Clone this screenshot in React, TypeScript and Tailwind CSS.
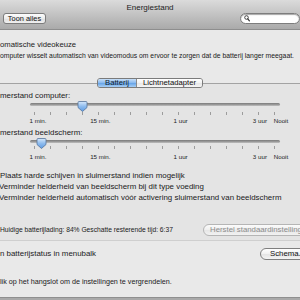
import React from "react";

const ticks = Array.from({ length: 16 }, (_, i) => i);

function Thumb() {
  return (
    <svg width="11" height="11" viewBox="0 0 11 11" className="block">
      <defs>
        <linearGradient id="tg" x1="0" y1="0" x2="0" y2="1">
          <stop offset="0" stopColor="#d6e8fb" />
          <stop offset="0.5" stopColor="#8dbbee" />
          <stop offset="1" stopColor="#5d9be2" />
        </linearGradient>
      </defs>
      <path d="M1 1.5 Q1 0.5 2 0.5 H9 Q10 0.5 10 1.5 V6.5 L5.5 10.5 L1 6.5 Z" fill="url(#tg)" stroke="#56739a" strokeWidth="0.8" />
    </svg>
  );
}

function Slider({ thumbClass, rowClass }: { thumbClass: string; rowClass: string }) {
  return (
    <div className={rowClass}>
      <div className="relative ml-[30px] w-[250px] h-[3px] mt-[3px] rounded-full bg-[linear-gradient(to_bottom,#7a7a7a,#9d9d9d_60%,#c2c2c2)]">
        <div className={thumbClass}>
          <Thumb />
        </div>
      </div>
    </div>
  );
}

function Ticks({ cls }: { cls: string }) {
  return (
    <div className={"ml-[26px] grid grid-cols-[repeat(16,16.07px)] h-[3px] " + cls}>
      {ticks.map((i) => (
        <div key={i} className="flex justify-center">
          <div className="w-px h-[3px] bg-[#9c9c9c]" />
        </div>
      ))}
    </div>
  );
}

function TickLabels({ cls }: { cls: string }) {
  return (
    <div className={"ml-[26px] grid grid-cols-[repeat(16,16.07px)] h-[7px] text-[6.2px] leading-[7px] text-[#222] " + cls}>
      <div className="col-start-1 flex justify-center whitespace-nowrap translate-x-[4px]">1 min.</div>
      <div className="col-start-5 flex justify-center whitespace-nowrap translate-x-[2px]">15 min.</div>
      <div className="col-start-10 flex justify-center whitespace-nowrap translate-x-[2px]">1 uur</div>
      <div className="col-start-15 flex justify-center whitespace-nowrap translate-x-[1px]">3 uur</div>
      <div className="col-start-16 flex justify-center whitespace-nowrap translate-x-[6px]">Nooit</div>
    </div>
  );
}

export default function App() {
  return (
    <div className="w-[300px] h-[300px] overflow-hidden flex flex-col bg-[#e9e9e9] text-[#1a1a1a] font-['Liberation_Sans',Arial,sans-serif]">
      {/* Title bar + toolbar */}
      <div className="h-[30px] shrink-0 flex flex-col border-b border-[#8e8e8e] bg-[linear-gradient(to_bottom,#dbdbdb,#aaaaaa)]">
        <div className="h-[13px] flex items-center justify-center text-[8px] leading-none text-[#222] pt-[2px]">Energiestand</div>
        <div className="h-[11px] flex items-center">
          <div className="ml-[3px] w-[51px] h-[11px] flex items-center justify-center rounded-[3px] border border-[#7c7c7c] bg-[linear-gradient(to_bottom,#fdfdfd,#ececec_50%,#e0e0e0_51%,#f0f0f0)] text-[7.4px] leading-none text-[#111]">
            Toon alles
          </div>
          <div className="ml-[194px] w-[60px] h-[11.5px] shrink-0 flex items-center rounded-full border border-[#7d7d7d] bg-white shadow-[inset_0_1px_1px_rgba(0,0,0,0.35)] pl-[3px]">
            <svg width="6" height="7" viewBox="0 0 6 7">
              <circle cx="2.5" cy="2.5" r="1.8" fill="none" stroke="#333" strokeWidth="0.9" />
              <path d="M3.8 3.9 L5.4 5.9" stroke="#333" strokeWidth="1.2" strokeLinecap="round" />
            </svg>
          </div>
        </div>
      </div>

      {/* Heading */}
      <div className="mt-[10px] h-[10px] leading-[10px] text-[7.7px] whitespace-nowrap">omatische videokeuze</div>
      <div className="mt-px h-[9px] leading-[9px] text-[6.8px] whitespace-nowrap">omputer wisselt automatisch van videomodus om ervoor te zorgen dat de batterij langer meegaat.</div>

      {/* Tabs row */}
      <div className="mt-[18px] h-[10px] flex items-center bg-[linear-gradient(to_bottom,transparent_50%,#e4e4e4_50%)]">
        <div className="w-[97px] h-px bg-[#a3a3a3]" />
        <div className="w-[106px] h-[10px] flex rounded-[3px] border border-[#7b7b7b] overflow-hidden text-[7.7px] leading-none">
          <div className="w-[38px] flex items-center justify-center bg-[linear-gradient(to_bottom,#c8e0f8,#86b7ee_50%,#64a2e7_51%,#a8cff5)] text-[#0d1a2b]">Batterij</div>
          <div className="flex-1 flex items-center justify-center border-l border-[#8a8a8a] bg-[linear-gradient(to_bottom,#ffffff,#f3f3f3_50%,#e7e7e7_51%,#f6f6f6)] text-[#111]">Lichtnetadapter</div>
        </div>
        <div className="flex-1 h-px bg-[#a3a3a3]" />
      </div>

      {/* Tab box */}
      <div className="flex flex-col bg-[#e4e4e4] border-b border-[#cfcfcf] pb-[4px]">
        <div className="mt-[3px] h-[9px] leading-[9px] text-[7.9px] whitespace-nowrap">merstand computer:</div>
        <Slider rowClass="h-[12px]" thumbClass="absolute left-[47px] top-[-2px]" />
        <Ticks cls="" />
        <TickLabels cls="mt-[2px]" />

        <div className="mt-[4px] h-[9px] leading-[9px] text-[7.9px] whitespace-nowrap">merstand beeldscherm:</div>
        <Slider rowClass="h-[9px]" thumbClass="absolute left-[6px] top-[-2px]" />
        <Ticks cls="" />
        <TickLabels cls="mt-[4px]" />

        <div className="mt-[10px] h-[11px] leading-[11px] text-[7.9px] whitespace-nowrap">Plaats harde schijven in sluimerstand indien mogelijk</div>
        <div className="h-[11px] leading-[11px] text-[7.9px] whitespace-nowrap -ml-px">Verminder helderheid van beeldscherm bij dit type voeding</div>
        <div className="h-[11px] leading-[11px] text-[7.9px] whitespace-nowrap -ml-px">Verminder helderheid automatisch vóór activering sluimerstand van beeldscherm</div>

        <div className="mt-[21px] h-[12px] flex items-center">
          <div className="w-[203px] shrink-0 text-[6.7px] leading-none whitespace-nowrap">Huidige batterijlading: 84%  Geschatte resterende tijd: 6:37</div>
          <div className="w-[120px] shrink-0 h-[12px] flex items-center pl-[6px] rounded-full border border-[#b5b5b5] bg-[linear-gradient(to_bottom,#fbfbfb,#efefef_50%,#e6e6e6_51%,#f2f2f2)] text-[7.8px] leading-none text-[#8c8c8c] whitespace-nowrap">
            Herstel standaardinstellingen
          </div>
        </div>
      </div>

      {/* Below the box */}
      <div className="mt-[7px] h-[12px] flex items-center">
        <div className="w-[260px] shrink-0 text-[7.9px] leading-none whitespace-nowrap">n batterijstatus in menubalk</div>
        <div className="w-[50px] shrink-0 h-[12px] flex items-center pl-[9px] rounded-full border border-[#7f7f7f] bg-[linear-gradient(to_bottom,#ffffff,#f1f1f1_50%,#e4e4e4_51%,#f4f4f4)] text-[7.8px] leading-none text-[#111] whitespace-nowrap">
          Schema...
        </div>
      </div>

      <div className="mt-[18px] h-[8px] leading-[8px] text-[7.2px] whitespace-nowrap">lik op het hangslot om de instellingen te vergrendelen.</div>

      <div className="mt-auto h-[3px] shrink-0 border-t border-[#8f8f8f] bg-[#a9a9a9]" />
    </div>
  );
}
